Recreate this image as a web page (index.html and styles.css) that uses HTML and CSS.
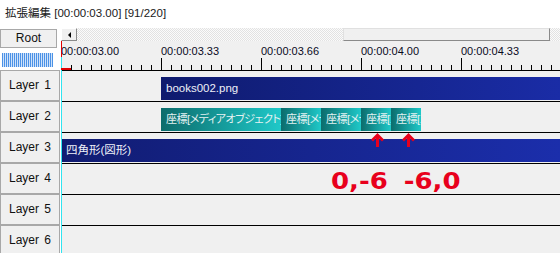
FILE: index.html
```html
<!DOCTYPE html>
<html lang="ja">
<head>
<meta charset="utf-8">
<title>拡張編集</title>
<link rel="stylesheet" href="styles.css">
</head>
<body>
<div class="app">
  <div class="title">拡張編集 [00:00:03.00] [91/220]</div>
  <div class="main">
    <div class="side">
      <div class="root">Root</div>
      <div class="meter-wrap"><div class="meter"></div></div>
      <div class="layer">Layer 1</div>
      <div class="layer">Layer 2</div>
      <div class="layer">Layer 3</div>
      <div class="layer">Layer 4</div>
      <div class="layer">Layer 5</div>
      <div class="layer">Layer 6</div>
    </div>
    <div class="tl">
      <div class="scroll">
        <div class="sbtn"><span class="tri"></span></div>
        <div class="track"><div class="thumb"></div></div>
      </div>
      <div class="ruler">
        <span>00:00:03.00</span>
        <span>00:00:03.33</span>
        <span>00:00:03.66</span>
        <span>00:00:04.00</span>
        <span>00:00:04.33</span>
      </div>
      <div class="row">
        <div class="clip blue offset" style="width:399px">books002.png</div>
      </div>
      <div class="row">
        <div class="clip teal offset" style="width:120px">座標[メディアオブジェクト]</div>
        <div class="clip teal" style="width:40px">座標[メディアオブジェクト]</div>
        <div class="clip teal" style="width:40px">座標[メディアオブジェクト]</div>
        <div class="clip teal" style="width:30px">座標[メディアオブジェクト]</div>
        <div class="clip teal" style="width:30px">座標[メディアオブジェクト]</div>
      </div>
      <div class="row">
        <div class="clip blue2" style="width:499px">四角形(図形)</div>
      </div>
      <div class="row"></div>
      <div class="row"></div>
      <div class="row"></div>
    </div>
  </div>

  <div class="cur-red"></div>
  <div class="cur-cyan"></div>
  <div class="cur-mark"></div>

  <svg class="arrow arrow1" width="13" height="14" viewBox="0 0 13 14"><path d="M6.5 0 L13 6.5 L11 8.5 L8 5.5 L8 14 L5 14 L5 5.5 L2 8.5 L0 6.5 Z" fill="#e8001c"/></svg>
  <svg class="arrow arrow2" width="13" height="14" viewBox="0 0 13 14"><path d="M6.5 0 L13 6.5 L11 8.5 L8 5.5 L8 14 L5 14 L5 5.5 L2 8.5 L0 6.5 Z" fill="#e8001c"/></svg>
  <div class="note"><span>0,-6</span><span>-6,0</span></div>
</div>
</body>
</html>
```
FILE: styles.css
```css
body {
  margin: 0;
  background: #fff;
  font-family: "Liberation Sans", "Noto Sans CJK JP", sans-serif;
}

.app {
  position: relative;
  width: 560px;
  height: 253px;
  overflow: hidden;
}

.title {
  height: 28px;
  box-sizing: border-box;
  padding: 5px 0 0 5px;
  font-size: 11.5px;
  line-height: 16px;
  color: #1a1a1a;
}

.main {
  display: flex;
}

.side {
  width: 60px;
  flex: none;
  margin-right: 1px;
  display: flex;
  flex-direction: column;
}

.root {
  margin-top: 1px;
  width: 57px;
  height: 19px;
  box-sizing: border-box;
  border: 1px solid #a8a8a8;
  background: #f0f0f0;
  text-align: center;
  font-size: 12px;
  line-height: 17px;
  color: #111;
}

.meter-wrap {
  height: 22px;
  box-sizing: border-box;
  padding: 5px 0 0 2px;
}

.meter {
  width: 51px;
  height: 14px;
  background: repeating-linear-gradient(90deg, #4b92e6 0 1px, #cfe2fa 1px 2px);
}

.layer {
  height: 31px;
  flex: none;
  box-sizing: border-box;
  border: 1px solid #a8a8a8;
  background: #f0f0f0;
  text-align: center;
  font-size: 12px;
  line-height: 29px;
  word-spacing: 2px;
  color: #111;
}

.tl {
  flex: 1;
  display: flex;
  flex-direction: column;
}

.scroll {
  height: 13px;
  display: flex;
}

.sbtn {
  width: 16px;
  flex: none;
  box-sizing: border-box;
  border: 1px solid;
  border-color: #fff #8a8a8a #8a8a8a #fff;
  background: #f0f0f0;
  display: flex;
  align-items: center;
  justify-content: center;
}

.tri {
  width: 0;
  height: 0;
  border-style: solid;
  border-width: 3px 3px 3px 0;
  border-color: transparent #000 transparent transparent;
}

.track {
  flex: 1;
  background: repeating-conic-gradient(#e2e2e2 0 25%, #fbfbfb 0 50%) 0 0 / 2px 2px;
}

.thumb {
  margin-left: 266px;
  width: 207px;
  height: 13px;
  box-sizing: border-box;
  border: 1px solid;
  border-color: #e0e0e0 #8a8a8a #8a8a8a #e0e0e0;
  background: #f0f0f0;
}

.ruler {
  height: 29px;
  display: flex;
  background:
    repeating-linear-gradient(90deg, #000 0 1px, transparent 1px 100px) left bottom / 100% 12px no-repeat,
    repeating-linear-gradient(90deg, #000 0 1px, transparent 1px 10px) left bottom / 100% 5px no-repeat,
    #f0f0f0;
}

.ruler span {
  width: 100px;
  flex: none;
  padding-top: 4px;
  font-size: 11px;
  line-height: 13px;
  color: #0a0a1e;
}

.row {
  height: 31px;
  flex: none;
  box-sizing: border-box;
  border-top: 1px solid #000;
  padding: 6px 0 1px;
  background: #f0f0f0;
  display: flex;
}

.clip {
  height: 23px;
  flex: none;
  box-sizing: border-box;
  padding-left: 5px;
  overflow: hidden;
  white-space: nowrap;
  font-size: 11.5px;
  line-height: 23px;
  color: #eef0f8;
}

.offset {
  margin-left: 100px;
}

.blue {
  background: linear-gradient(90deg, #0f1b6e, #1a2ca6);
}

.blue2 {
  background: linear-gradient(90deg, #111c72, #1b2eab);
}

.teal {
  background: linear-gradient(90deg, #0c6c6c, #1fc8c8);
  color: #e4f2f2;
  font-size: 11px;
  letter-spacing: -0.5px;
  font-feature-settings: "palt";
}

.cur-red {
  position: absolute;
  left: 61px;
  top: 41px;
  width: 1px;
  height: 16px;
  background: #e00000;
}

.cur-cyan {
  position: absolute;
  left: 61px;
  top: 57px;
  width: 1px;
  height: 196px;
  background: #30e4f0;
}

.cur-mark {
  position: absolute;
  left: 61px;
  top: 68px;
  width: 10px;
  height: 2px;
  background: #e00000;
}

.arrow {
  position: absolute;
  top: 133px;
}

.arrow1 {
  left: 371px;
}

.arrow2 {
  left: 402px;
}

.note {
  position: absolute;
  left: 331px;
  top: 168px;
  display: flex;
  gap: 14px;
  font-family: "DejaVu Sans", sans-serif;
  font-weight: bold;
  font-size: 23px;
  line-height: 26px;
  color: #e8001c;
  transform: scaleX(1.13);
  transform-origin: left top;
}
```
